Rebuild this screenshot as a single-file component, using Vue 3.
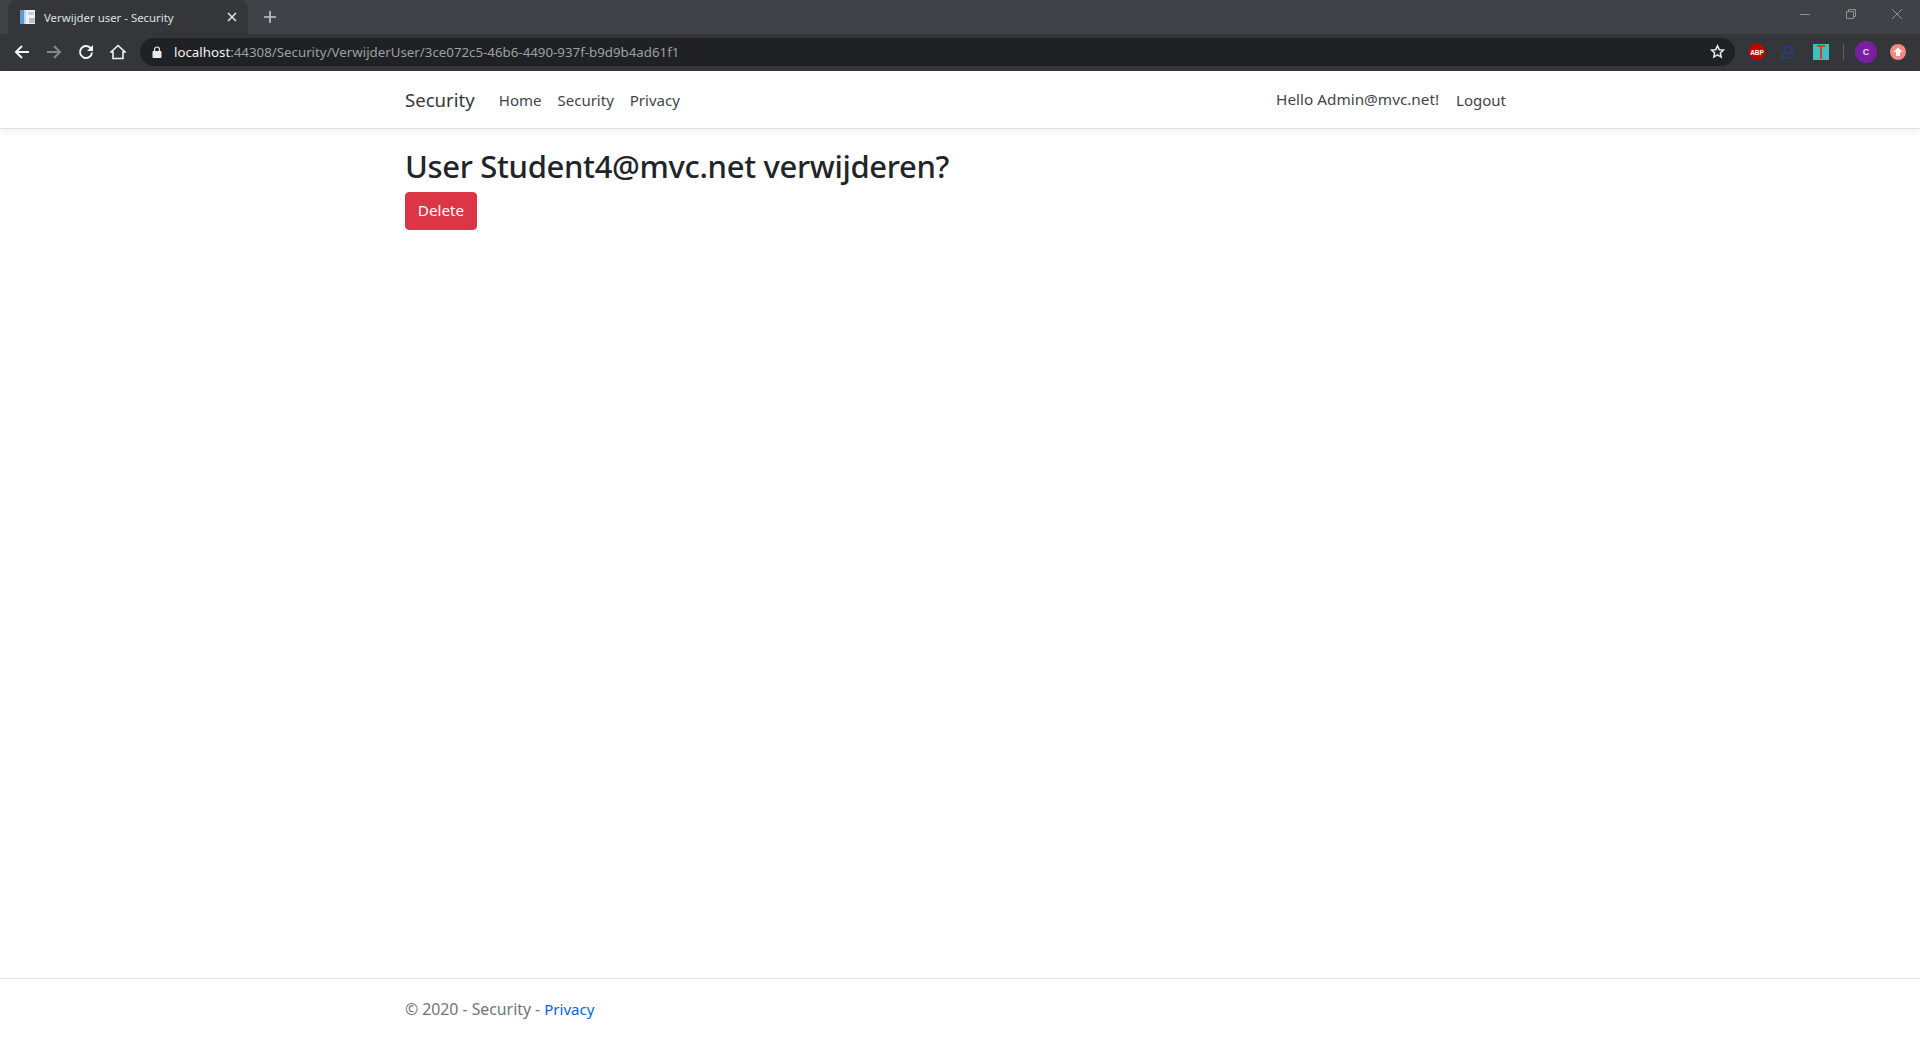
<script setup>
const navLinks = ['Home', 'Security', 'Privacy']
</script>

<template>
  <div class="page">
    <div class="chrome">
      <div class="tabstrip">
        <div class="tab">
          <svg class="favicon" width="16" height="16" viewBox="0 0 16 16">
            <rect x="0" y="1" width="15" height="14" fill="#eef1f4" />
            <rect x="0" y="1" width="4" height="14" fill="#5b9bd5" />
            <rect x="4" y="1" width="2" height="14" fill="#bcd6ee" />
            <rect x="8" y="3" width="6" height="3" fill="#c8ced4" />
            <rect x="9" y="9" width="6" height="5" fill="#b9c0c7" />
          </svg>
          <span class="tab-title">Verwijder user - Security</span>
          <svg class="tab-close" width="10" height="10" viewBox="0 0 10 10">
            <path d="M1 1l8 8M9 1l-8 8" stroke="#dee1e6" stroke-width="1.6" />
          </svg>
        </div>
        <svg class="new-tab" width="14" height="14" viewBox="0 0 14 14">
          <path d="M7 1v12M1 7h12" stroke="#c4c7cb" stroke-width="1.6" />
        </svg>
        <div class="window-controls">
          <svg width="12" height="12" viewBox="0 0 12 12"><path d="M1 6.5h10" stroke="#8f9295" /></svg>
          <svg width="12" height="12" viewBox="0 0 12 12" fill="none" stroke="#8f9295"><path d="M1.5 3.5h7v7h-7zM3.5 3.5v-2h7v7h-2" /></svg>
          <svg width="12" height="12" viewBox="0 0 12 12"><path d="M1 1l10 10M11 1L1 11" stroke="#8f9295" /></svg>
        </div>
      </div>
      <div class="toolbar">
        <svg class="tool" width="16" height="16" viewBox="0 0 16 16" fill="none" stroke="#f1f3f4" stroke-width="2"><path d="M15 8H2M8 2L2 8l6 6" /></svg>
        <svg class="tool" width="16" height="16" viewBox="0 0 16 16" fill="none" stroke="#85888b" stroke-width="2"><path d="M1 8h13M8 2l6 6-6 6" /></svg>
        <svg class="tool" width="16" height="16" viewBox="0 0 16 16" fill="none"><path d="M13.2 5A6 6 0 1 0 14 8.5" stroke="#f1f3f4" stroke-width="2" /><path d="M15 1v6H9z" fill="#f1f3f4" /></svg>
        <svg class="tool" width="16" height="16" viewBox="0 0 16 16" fill="none" stroke="#f1f3f4" stroke-width="1.6"><path d="M1 8l7-6.5L15 8h-2v6.5H3V8z" /></svg>
        <div class="omnibox">
          <svg width="10" height="12" viewBox="0 0 10 12"><rect x="0.5" y="5" width="9" height="7" rx="1" fill="#e8eaed" /><path d="M2.5 5.5V3.5a2.5 2.5 0 0 1 5 0v2" fill="none" stroke="#e8eaed" stroke-width="1.2" /></svg>
          <span class="url"><span class="host">localhost</span>:44308/Security/VerwijderUser/3ce072c5-46b6-4490-937f-b9d9b4ad61f1</span>
          <svg class="star" width="15" height="15" viewBox="0 0 24 24" fill="none" stroke="#e8eaed" stroke-width="2.4"><path d="M12 3l2.8 6.1 6.7.7-5 4.5 1.4 6.6L12 17.5l-5.9 3.4 1.4-6.6-5-4.5 6.7-.7z" /></svg>
        </div>
        <div class="extensions">
          <svg width="16" height="16" viewBox="0 0 16 16"><path d="M5 0h6l5 5v6l-5 5H5l-5-5V5z" fill="#c80000" /><text x="8" y="10.5" text-anchor="middle" class="abp">ABP</text></svg>
          <svg width="16" height="16" viewBox="0 0 17 16" fill="none" stroke="#1f4394" stroke-width="1.3"><circle cx="8" cy="6" r="4" /><path d="M11 9l5 4M3.5 8.5L1 14h9" /></svg>
          <svg width="16" height="16" viewBox="0 0 16 16"><rect width="16" height="16" fill="#3fbfbf" /><path d="M4 1h8v2H9v12H7V3H4z" fill="#d9411e" /></svg>
          <span class="separator"></span>
          <span class="avatar">C</span>
          <svg width="16" height="16" viewBox="0 0 16 16"><circle cx="8" cy="8" r="8" fill="#f28b82" /><path d="M8 3.5L12.5 8H10v4H6V8H3.5z" fill="#fff" /></svg>
        </div>
      </div>
    </div>

    <header class="navbar">
      <div class="container nav-inner">
        <a class="brand">Security</a>
        <nav class="nav-links">
          <a v-for="link in navLinks" :key="link" class="nav-link">{{ link }}</a>
        </nav>
        <div class="nav-right">
          <a class="nav-link hello">Hello Admin@mvc.net!</a>
          <a class="nav-link">Logout</a>
        </div>
      </div>
    </header>

    <main class="container main">
      <h1>User Student4@mvc.net verwijderen?</h1>
      <button class="btn-danger">Delete</button>
    </main>

    <footer class="footer">
      <div class="container">© 2020 - Security - <a class="privacy">Privacy</a></div>
    </footer>
  </div>
</template>

<style>
html, body { margin: 0; background: #fff; }
</style>

<style scoped>
.page {
  height: 1040px;
  display: flex;
  flex-direction: column;
  overflow: hidden;
  font-family: "Noto Sans", "Open Sans", sans-serif;
  color: #212529;
  background: #fff;
}
.chrome { height: 71px; flex: none; background: #35363a; }
.tabstrip {
  height: 34px;
  display: flex;
  align-items: center;
  background: #3f4347;
}
.tab {
  width: 240px;
  height: 34px;
  margin-left: 8px;
  padding: 0 9px 0 12px;
  box-sizing: border-box;
  border-radius: 8px 8px 0 0;
  background: #35363a;
  display: flex;
  align-items: center;
  gap: 8px;
  flex: none;
}
.favicon { flex: none; }
.tab-title {
  flex: 1;
  font-size: 11.4px;
  color: #dee1e6;
  white-space: nowrap;
}
.tab-close { flex: none; margin-right: 2px; }
.new-tab { margin-left: 15px; flex: none; }
.window-controls {
  margin-left: auto;
  margin-top: -6px;
  display: flex;
  gap: 34px;
  padding-right: 17px;
}
.toolbar {
  height: 37px;
  display: flex;
  align-items: center;
  padding: 0 14px 2px 14px;
  box-sizing: border-box;
}
.tool { flex: none; margin-right: 16px; }
.omnibox {
  flex: 1;
  height: 28px;
  margin-left: -2px;
  padding: 0 10px 0 12px;
  border-radius: 14px;
  background: #202124;
  display: flex;
  align-items: center;
  box-sizing: border-box;
}
.url {
  margin-left: 12px;
  font-size: 13.3px;
  color: #9aa0a6;
  white-space: nowrap;
  flex: 1;
}
.host { color: #f1f3f4; }
.star { flex: none; }
.extensions {
  display: flex;
  align-items: center;
  gap: 16px;
  margin-left: 14px;
  flex: none;
}
.abp {
  font: bold 6.5px "Liberation Sans", sans-serif;
  fill: #fff;
}
.separator { width: 1px; height: 16px; margin: 0 -2px 0 -2px; background: #5f6368; }
.avatar {
  width: 22px;
  height: 22px;
  margin: 0 -3px;
  border-radius: 50%;
  background: #7b1fa2;
  color: #e8d9f0;
  font: bold 9px/22px "Liberation Sans", sans-serif;
  text-align: center;
}
.container {
  width: 1140px;
  margin: 0 auto;
  padding: 0 15px;
  box-sizing: border-box;
}
.navbar {
  height: 58px;
  flex: none;
  box-sizing: border-box;
  border-bottom: 1px solid #dee2e6;
  box-shadow: 0 4px 8px rgba(0, 0, 0, 0.05);
  display: flex;
  align-items: center;
}
.nav-inner { display: flex; align-items: center; }
.brand {
  font-size: 18.6px;
  color: #343a40;
  margin-right: 24px;
}
.nav-links { display: flex; gap: 16px; }
.nav-link {
  font-size: 15px;
  color: #3f444a;
}
.nav-right { margin-left: auto; display: flex; gap: 17px; padding-right: 9px; }
.hello { position: relative; top: -1px; font-size: 15.3px; }
.main { flex: 1; padding-top: 17px; }
h1 {
  margin: 0 0 6px;
  font-size: 31px;
  font-weight: 500;
  line-height: 40px;
  letter-spacing: -0.33px;
  color: #212529;
}
.btn-danger {
  display: block;
  width: 72px;
  height: 38px;
  padding: 0 0 2px;
  border: 1px solid #dc3545;
  border-radius: 4px;
  background: #dc3545;
  color: #fff;
  font: 15.3px "Noto Sans", sans-serif;
}
.footer {
  height: 62px;
  flex: none;
  box-sizing: border-box;
  border-top: 1px solid #dee2e6;
  font-size: 15.8px;
  line-height: 60px;
  color: #6c757d;
}
.privacy { color: #0366d6; font-size: 15px; }
</style>
